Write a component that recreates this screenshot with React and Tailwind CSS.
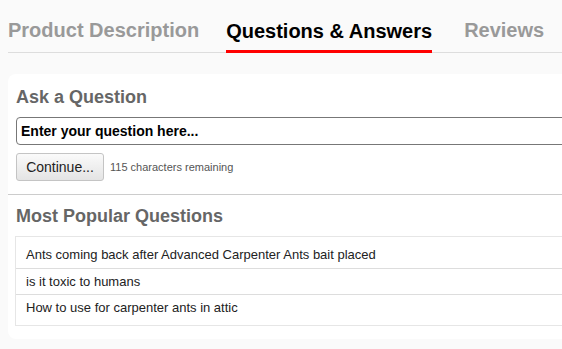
import React from 'react';

const questions = [
  'Ants coming back after Advanced Carpenter Ants bait placed',
  'is it toxic to humans',
  'How to use for carpenter ants in attic',
];

export default function App() {
  return (
    <div className="w-[562px] h-[349px] overflow-hidden bg-[#fafafa] font-['Liberation_Sans',Arial,sans-serif]">
      {/* tabs */}
      <div className="ml-2 w-[600px] flex items-end border-b border-[#dddddd] pt-[18px]">
        <div className="text-[20px] font-bold text-[#999999] pb-[10px] leading-[24px]">Product Description</div>
        <div className="ml-[27px] text-[20px] font-bold text-black pb-[7px] leading-[24px] border-b-[3px] border-[#ff0000] mb-[-1px]">Questions &amp; Answers</div>
        <div className="ml-[32px] text-[20px] font-bold text-[#999999] pb-[10px] leading-[24px]">Reviews</div>
      </div>

      {/* card */}
      <div className="ml-2 mt-[21px] w-[600px] h-[265px] bg-white rounded-[8px]">
        <div className="px-2 pt-[12px]">
          <h2 className="text-[18px] font-bold text-[#666666] leading-[22px]">Ask a Question</h2>
          <div className="mt-[9px] h-[28px] border border-[#777777] rounded-[4px] flex items-center pl-[4px]">
            <span className="text-[14px] font-bold text-black">Enter your question here...</span>
          </div>
          <div className="mt-[8px] flex items-center gap-[6px]">
            <button className="h-[28px] w-[88px] border border-[#c4c4c4] rounded-[3px] bg-gradient-to-b from-[#fafafa] to-[#e4e4e4] text-[14px] text-[#222222]">Continue...</button>
            <span className="text-[11px] text-[#555555]">115 characters remaining</span>
          </div>
        </div>
        <div className="mt-[13px] border-t border-[#cccccc]"></div>
        <div className="px-2 pt-[10px]">
          <h2 className="text-[18px] font-bold text-[#666666] leading-[22px]">Most Popular Questions</h2>
          <ul className="mt-[9px] -ml-px border border-[#e6e6e6] py-[5px]">
            {questions.map((q, i) => (
              <li
                key={q}
                className={`h-[26px] flex items-center pl-[10px] text-[13px] text-[#222222] ${i > 0 ? 'border-t border-[#dddddd]' : ''}`}
              >
                {q}
              </li>
            ))}
          </ul>
        </div>
      </div>
    </div>
  );
}
